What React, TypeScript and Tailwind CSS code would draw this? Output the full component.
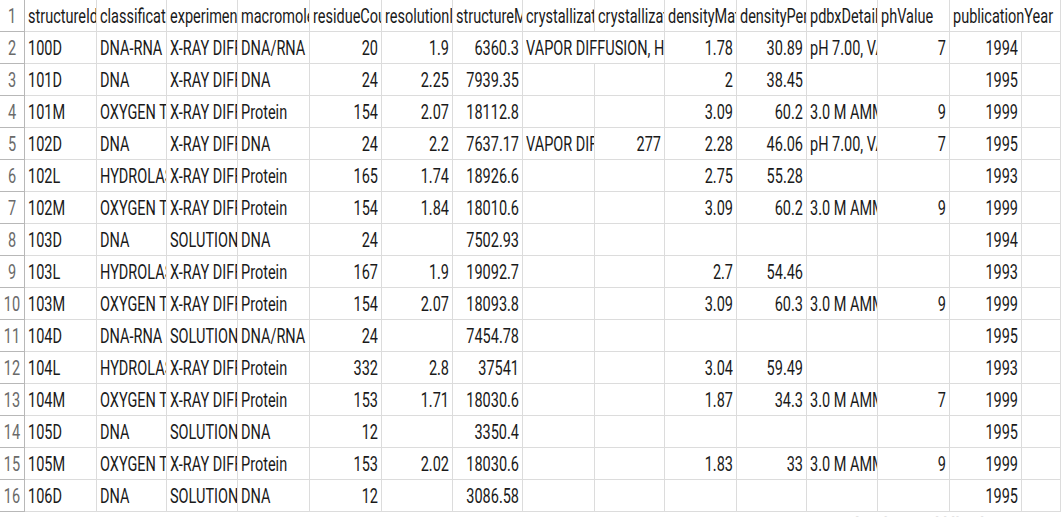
type Cell = string | number | null;

const header: Cell[] = [
  "structureId",
  "classification",
  "experimentalTechnique",
  "macromoleculeType",
  "residueCount",
  "resolutionInAngstroms",
  "structureMolecularWeight",
  "crystallizationMethod",
  "crystallizationTempK",
  "densityMatthews",
  "densityPercentSol",
  "pdbxDetails",
  "phValue",
  "publicationYear",
  null,
];

const XRAY = "X-RAY DIFFRACTION";
const OXY = "OXYGEN TRANSPORT";
const HYD = "HYDROLASE";
const AMM = "3.0 M AMMONIUM SULFATE";
const PH7 = "pH 7.00, VAPOR DIFFUSION";

const rows: Cell[][] = [
  ["100D", "DNA-RNA HYBRID", XRAY, "DNA/RNA", 20, 1.9, 6360.3, "VAPOR DIFFUSION, HANGING DROP", null, 1.78, 30.89, PH7, 7, 1994, null],
  ["101D", "DNA", XRAY, "DNA", 24, 2.25, 7939.35, null, null, 2, 38.45, null, null, 1995, null],
  ["101M", OXY, XRAY, "Protein", 154, 2.07, 18112.8, null, null, 3.09, 60.2, AMM, 9, 1999, null],
  ["102D", "DNA", XRAY, "DNA", 24, 2.2, 7637.17, "VAPOR DIFFUSION", 277, 2.28, 46.06, PH7, 7, 1995, null],
  ["102L", HYD, XRAY, "Protein", 165, 1.74, 18926.6, null, null, 2.75, 55.28, null, null, 1993, null],
  ["102M", OXY, XRAY, "Protein", 154, 1.84, 18010.6, null, null, 3.09, 60.2, AMM, 9, 1999, null],
  ["103D", "DNA", "SOLUTION NMR", "DNA", 24, null, 7502.93, null, null, null, null, null, null, 1994, null],
  ["103L", HYD, XRAY, "Protein", 167, 1.9, 19092.7, null, null, 2.7, 54.46, null, null, 1993, null],
  ["103M", OXY, XRAY, "Protein", 154, 2.07, 18093.8, null, null, 3.09, 60.3, AMM, 9, 1999, null],
  ["104D", "DNA-RNA HYBRID", "SOLUTION NMR", "DNA/RNA", 24, null, 7454.78, null, null, null, null, null, null, 1995, null],
  ["104L", HYD, XRAY, "Protein", 332, 2.8, 37541, null, null, 3.04, 59.49, null, null, 1993, null],
  ["104M", OXY, XRAY, "Protein", 153, 1.71, 18030.6, null, null, 1.87, 34.3, AMM, 7, 1999, null],
  ["105D", "DNA", "SOLUTION NMR", "DNA", 12, null, 3350.4, null, null, null, null, null, null, 1995, null],
  ["105M", OXY, XRAY, "Protein", 153, 2.02, 18030.6, null, null, 1.83, 33, AMM, 9, 1999, null],
  ["106D", "DNA", "SOLUTION NMR", "DNA", 12, null, 3086.58, null, null, null, null, null, null, 1995, null],
];

const spanClass: Record<number, string> = { 1: "", 2: "col-span-2", 3: "col-span-3" };

function Text({ children }: { children: React.ReactNode }) {
  return (
    <span className="block shrink-0 leading-none scale-y-[1.45] origin-bottom">
      {children}
    </span>
  );
}

function SheetRow({ n, cells }: { n: number; cells: Cell[] }) {
  const out: React.ReactNode[] = [];
  let i = 0;
  while (i < cells.length) {
    const v = cells[i];
    let span = 1;
    if (typeof v === "string") {
      while (i + span < cells.length && cells[i + span] === null) span++;
    }
    const isNum = typeof v === "number";
    out.push(
      <div
        key={i}
        className={`${spanClass[span]} h-8 flex items-end pb-[3px] overflow-hidden whitespace-nowrap border-b border-r border-[#dcdcdc] ${
          isNum ? "justify-end pr-[3px]" : "justify-start pl-[3px]"
        }`}
      >
        {v !== null && <Text>{String(v)}</Text>}
      </div>
    );
    i += span;
  }
  return (
    <>
      <div className="h-8 flex items-end justify-center pb-[3px] overflow-hidden border-b border-r border-[#b8b8b8] text-[#6a6a6a]">
        <Text>{n}</Text>
      </div>
      {out}
    </>
  );
}

export default function App() {
  return (
    <div className="relative w-[1061px] h-[517px] overflow-hidden bg-white text-[14.5px] text-[#1a1a1a] font-['Roboto',sans-serif]">
      <div className="grid grid-cols-[25px_72px_70px_71px_72px_72px_71px_70px_72px_70px_72px_70px_71px_72px_72px_39px]">
        <SheetRow n={1} cells={header} />
        {rows.map((r, idx) => (
          <SheetRow key={idx} n={idx + 2} cells={r} />
        ))}
      </div>
      <div className="absolute left-[850px] top-[508px] text-[22px] text-[#e4e4e4] whitespace-nowrap">
        Activate Windows
      </div>
    </div>
  );
}
